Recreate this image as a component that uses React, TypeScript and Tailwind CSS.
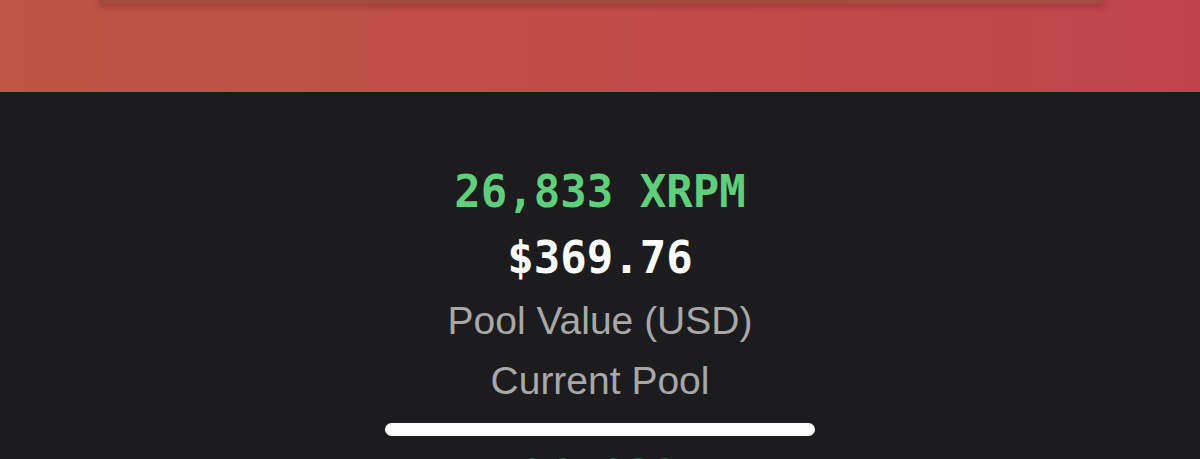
import React from 'react';

const mono = { fontFamily: '"DejaVu Sans Mono", "Liberation Mono", monospace' };

export default function App() {
  return (
    <div className="w-[1200px] h-[459px] overflow-hidden bg-[#1c1c1e]">
      {/* red header band with the bottom of a card peeking out */}
      <div className="h-[92px] bg-gradient-to-r from-[#be5444] to-[#c0454b]">
        <div className="ml-[98px] mr-[95px] h-[4px] rounded-b-lg bg-[#a44c3e] shadow-[0_2px_6px_rgba(90,20,20,0.45)]" />
      </div>

      <div className="flex flex-col items-center">
        <div
          className="mt-[67px] text-[44px] leading-[66px] font-bold text-[#5fcf7c]"
          style={mono}
        >
          26,833 XRPM
        </div>
        <div className="text-[44px] leading-[66px] font-bold text-white" style={mono}>
          $369.76
        </div>
        <div className="font-['Liberation_Sans',sans-serif] text-[39px] leading-[60px] text-[#a8a8a8]">
          Pool Value (USD)
        </div>
        <div className="font-['Liberation_Sans',sans-serif] text-[39px] leading-[60px] text-[#a8a8a8]">
          Current Pool
        </div>
        <div className="mt-[12px] w-[430px] h-[13px] rounded-full bg-white" />
        <div
          className="mt-[8px] text-[44px] leading-[66px] font-bold text-[#3f9c78]"
          style={mono}
        >
          26,833
        </div>
      </div>
    </div>
  );
}
